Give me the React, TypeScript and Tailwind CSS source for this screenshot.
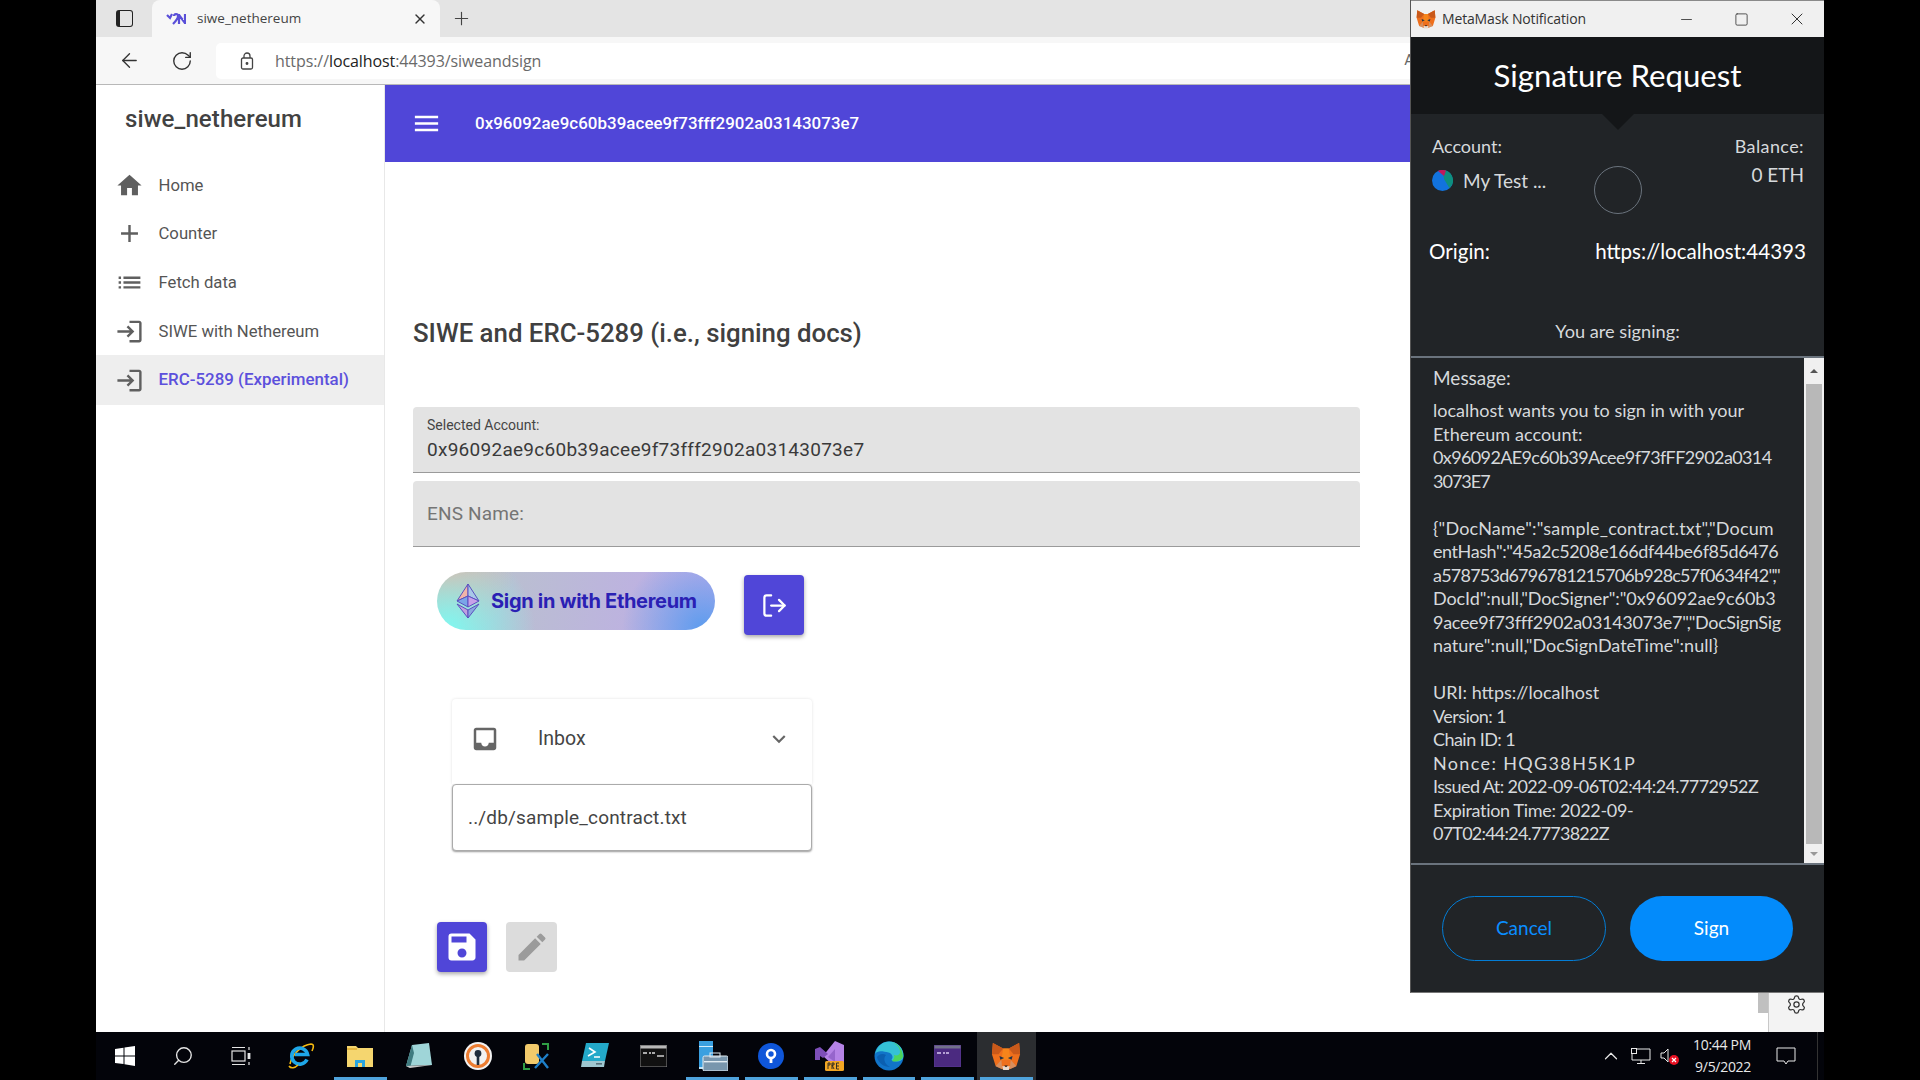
import React from "react";
import { MdHome, MdAdd, MdList, MdLogin, MdInbox, MdExpandMore, MdSave, MdEdit, MdMenu } from "react-icons/md";
import { ArrowLeft, RotateCw, Plus, X, LogOut, Settings, Minus, Square, Search, ChevronUp } from "lucide-react";

function Fox({ size }: { size: number }) {
  return (
    <svg width={size} height={size} viewBox="0 0 32 32">
      <polygon points="2,2 13,8 19,8 30,2 31,14 27,27 20,30 12,30 5,27 1,14" fill="#ee6f1c" />
      <polygon points="2,2 13,8 8,14 1,14" fill="#c9591a" />
      <polygon points="30,2 19,8 24,14 31,14" fill="#c9591a" />
      <polygon points="13,8 19,8 21,20 11,20" fill="#f6851b" />
      <polygon points="5,27 11,20 12,30" fill="#c0ad9e" opacity="0.5" />
      <polygon points="27,27 21,20 20,30" fill="#c0ad9e" opacity="0.5" />
      <polygon points="12,27 20,27 19,31 13,31" fill="#e8d8cc" />
      <polygon points="9,16 14,18 10,20" fill="#233447" />
      <polygon points="23,16 18,18 22,20" fill="#233447" />
      <polygon points="14,26 18,26 16,28" fill="#161616" />
    </svg>
  );
}

function WinLogo() {
  return (
    <svg width="20" height="20" viewBox="0 0 20 20" fill="#fff">
      <polygon points="0,3 8.5,1.8 8.5,9.4 0,9.4" />
      <polygon points="9.5,1.6 20,0 20,9.4 9.5,9.4" />
      <polygon points="0,10.4 8.5,10.4 8.5,18 0,16.9" />
      <polygon points="9.5,10.4 20,10.4 20,20 9.5,18.3" />
    </svg>
  );
}

function TaskView() {
  return (
    <svg width="20" height="20" viewBox="0 0 20 20" fill="none" stroke="#e5e5e5" strokeWidth="1.2">
      <rect x="1" y="5" width="13" height="10" />
      <path d="M1 1.5h13M1 18.5h13M18 1v3M18 16v3" />
      <rect x="16.6" y="7" width="2.8" height="6" fill="#e5e5e5" stroke="none" />
    </svg>
  );
}

function IE() {
  return (
    <svg width="28" height="28" viewBox="0 0 28 28" fill="none">
      <path d="M3 22C5 12 15 3 24 2c3 0 3 3 1 7" stroke="#f5b90f" strokeWidth="1.6" />
      <path d="M20 17.5a8 8 0 1 1 .6-5H8" stroke="#1ea7e8" strokeWidth="3.6" />
      <path d="M2 24c2 3 6 2 9-1" stroke="#f5b90f" strokeWidth="1.6" />
    </svg>
  );
}

function Folder() {
  return (
    <svg width="26" height="24" viewBox="0 0 26 24">
      <path d="M0 2h9l2 2h15v19H0z" fill="#f5d66f" />
      <rect x="0" y="4" width="10" height="2" fill="#e6b73f" />
      <path d="M8 23v-7h10v7h-3v-4h-4v4z" fill="#2aa5e0" />
    </svg>
  );
}

function Notepad() {
  return (
    <svg width="28" height="26" viewBox="0 0 28 26">
      <polygon points="7,2 24,0 27,22 1,23" fill="#9fd5d8" />
      <polygon points="7,2 1,23 5,25 9,10" fill="#3f7b80" />
      <polygon points="27,22 5,25 1,23" fill="#c9c9c9" />
    </svg>
  );
}

function OpenVPN() {
  return (
    <svg width="28" height="28" viewBox="0 0 28 28">
      <circle cx="14" cy="14" r="14" fill="#f2f2f2" />
      <circle cx="14" cy="14" r="10.5" fill="none" stroke="#ed7d31" strokeWidth="3" />
      <circle cx="14" cy="11.5" r="3.4" fill="#1f2d3d" />
      <rect x="12.7" y="12" width="2.6" height="11" fill="#1f2d3d" />
    </svg>
  );
}

function DbTool() {
  return (
    <svg width="28" height="28" viewBox="0 0 28 28" fill="none">
      <rect x="3" y="2" width="14" height="20" rx="3" fill="#f2ca6b" />
      <path d="M20 2h6v6M2 21v6h6" stroke="#2f9e44" strokeWidth="2" />
      <path d="M13 26L26 12M15 12l11 14" stroke="#1e7fc9" strokeWidth="2.4" />
    </svg>
  );
}

function PowerShell() {
  return (
    <svg width="28" height="26" viewBox="0 0 28 26">
      <polygon points="5,0 28,0 24,18 1,18" fill="#23a9c9" />
      <polygon points="1,18 24,18 23,24 0,24" fill="#9fc7d0" />
      <path d="M8 5l6 4-7 4M13 14h6" stroke="#fff" strokeWidth="1.6" fill="none" />
      <rect x="15" y="20" width="6" height="1.6" fill="#55707a" />
    </svg>
  );
}

function Cmd({ purple }: { purple?: boolean }) {
  return (
    <svg width="27" height="22" viewBox="0 0 27 22">
      <rect width="27" height="22" fill={purple ? "#4b2a80" : "#111"} stroke={purple ? "#5b3a94" : "#888"} />
      <rect x="0.5" y="0.5" width="26" height="3" fill={purple ? "#72718a" : "#b8b8b8"} />
      <path d="M3 8h4M9 8h2M12 8h3" stroke={purple ? "#d8c8f0" : "#ddd"} strokeWidth="1.4" />
      {!purple && <path d="M17 11h7" stroke="#ddd" strokeWidth="1.4" />}
    </svg>
  );
}

function Toolbox() {
  return (
    <svg width="30" height="30" viewBox="0 0 30 30">
      <rect x="1" y="0" width="14" height="26" fill="#3aa0e0" />
      <rect x="1" y="5" width="14" height="1" fill="#d5eefc" />
      <rect x="1" y="26" width="10" height="2" fill="#bde3f7" />
      <rect x="5" y="15" width="25" height="15" rx="1.5" fill="#7896ad" stroke="#e2ecf2" />
      <rect x="12" y="12" width="10" height="4" fill="none" stroke="#e2ecf2" />
      <rect x="6" y="20" width="23" height="1.4" fill="#e2ecf2" />
    </svg>
  );
}

function BlueKey() {
  return (
    <svg width="26" height="26" viewBox="0 0 26 26">
      <circle cx="13" cy="13" r="13" fill="#0f56d9" />
      <circle cx="13" cy="11" r="4" fill="none" stroke="#fff" strokeWidth="2.6" />
      <rect x="11.6" y="14" width="2.8" height="6" fill="#fff" />
    </svg>
  );
}

function VS() {
  return (
    <svg width="30" height="30" viewBox="0 0 30 30">
      <polygon points="20,0 29,4 29,22 20,26 8,15" fill="#b583e6" />
      <polygon points="0,8 5,6 13,13 8,17 5,15 5,19 0,19" fill="#7d4fb8" />
      <polygon points="13,16 20,21 20,8" fill="#5b2f9c" opacity="0.35" />
      <rect x="10" y="20" width="19" height="10" rx="1.5" fill="#f2a623" />
      <path d="M13 28v-6h2v2h-2M17 28v-6h2v2h-2l2 4M24 22h-2.5v6H24M21.5 25H24" stroke="#222" strokeWidth="0.9" fill="none" />
    </svg>
  );
}

function Edge() {
  return (
    <svg width="30" height="30" viewBox="0 0 30 30">
      <circle cx="15" cy="15" r="14.5" fill="#1174c9" />
      <path d="M1 13C3 4 10 .5 15 .5c8 0 14.5 6 14.5 14 0 4-3 6-7 6-3 0-5-1-5-2 2-2 1-6-3-7C9 10 3 9 1 13z" fill="#35c1d6" />
      <path d="M18 20c3 1 8 1 11-4 0-7-5-14-12-15 6 2 9 6 9 10 0 3-3 4-6 3 1 2 0 4-2 6z" fill="#4cd55d" />
      <path d="M12 14c-3 3-2 9 4 12-6 0-12-4-13-10 2-3 6-4 9-2z" fill="#0b5fb0" />
    </svg>
  );
}

const messageBlocks: { t: string; c: string }[][] = [
  [
    { t: "localhost wants you to sign in with your", c: "" },
    { t: "Ethereum account:", c: "tracking-[0.09px]" },
    { t: "0x96092AE9c60b39Acee9f73fFF2902a0314", c: "tracking-[-0.63px]" },
    { t: "3073E7", c: "tracking-[-1px]" },
  ],
  [
    { t: '{"DocName":"sample_contract.txt","Docum', c: "tracking-[0.16px]" },
    { t: 'entHash":"45a2c5208e166df44be6f85d6476', c: "tracking-[-0.43px]" },
    { t: 'a578753d6796781215706b928c57f0634f42","', c: "tracking-[-0.78px]" },
    { t: 'DocId":null,"DocSigner":"0x96092ae9c60b3', c: "tracking-[-0.08px]" },
    { t: '9acee9f73fff2902a03143073e7","DocSignSig', c: "tracking-[-0.31px]" },
    { t: 'nature":null,"DocSignDateTime":null}', c: "" },
  ],
  [
    { t: "URI: https://localhost", c: "" },
    { t: "Version: 1", c: "tracking-[-0.56px]" },
    { t: "Chain ID: 1", c: "tracking-[-0.55px]" },
    { t: "Nonce: HQG38H5K1P", c: "tracking-[1.35px]" },
    { t: "Issued At: 2022-09-06T02:44:24.7772952Z", c: "tracking-[-0.6px]" },
    { t: "Expiration Time: 2022-09-", c: "tracking-[-0.32px]" },
    { t: "07T02:44:24.7773822Z", c: "tracking-[-0.78px]" },
  ],
];

const nav = [
  { label: "Home", icon: <MdHome size={29} /> },
  { label: "Counter", icon: <MdAdd size={29} /> },
  { label: "Fetch data", icon: <MdList size={29} /> },
  { label: "SIWE with Nethereum", icon: <MdLogin size={29} /> },
];

function TaskItem({ children, line, active }: { children: React.ReactNode; line?: boolean; active?: boolean }) {
  return (
    <div className={`relative w-[58.75px] h-full flex items-center justify-center ${active ? "bg-[#2b2d30]" : ""}`}>
      {children}
      {line && <div className="absolute bottom-0 left-[3px] right-[3px] h-[3px] bg-[#4fa3dc]" />}
    </div>
  );
}

export default function App() {
  return (
    <div className="w-[1920px] h-[1080px] bg-black flex px-[96px] overflow-hidden font-['Roboto',sans-serif]">
      <div className="relative w-[1728px] h-full flex flex-col">
        {/* tab strip */}
        <div className="h-[37px] bg-[#e4e4e4] flex items-end shrink-0">
          <div className="w-[56px] h-full flex items-center justify-center">
            <div className="w-[17px] h-[17px] rounded-[3px] border-[1.5px] border-[#222] border-l-[4px]" />
          </div>
          <div className="w-[288px] h-[37px] bg-[#f7f7f7] rounded-t-[8px] flex items-center pl-[14px] pr-[12px]">
            <svg width="20" height="14" viewBox="0 0 20 14" fill="none" stroke="#5a4fd8" strokeWidth="2.2">
              <path d="M1 3l3 3 2-4" />
              <path d="M7 12c3-3 5-5 5-8 0-3-4-2-4 0M13 2v10M19 2v10M13 3l6 8" />
            </svg>
            <span className="ml-[11px] text-[13.5px] text-[#444] font-['Open_Sans',sans-serif] flex-1">siwe_nethereum</span>
            <X size={16} color="#333" strokeWidth={2} />
          </div>
          <div className="h-full flex items-center pl-[11px]">
            <Plus size={21} color="#444" strokeWidth={1.3} />
          </div>
        </div>
        {/* address row */}
        <div className="h-[48px] bg-[#f7f7f7] border-b border-[#b8b8b8] flex items-center shrink-0">
          <div className="w-[60px] flex justify-center pl-[6px]">
            <ArrowLeft size={23} color="#333" strokeWidth={1.4} />
          </div>
          <div className="w-[46px] flex justify-center pl-[5px]">
            <RotateCw size={22} color="#333" strokeWidth={1.5} />
          </div>
          <div className="ml-[14px] flex-1 h-[36px] bg-white rounded-l-[5px] flex items-center pl-[24px]">
            <svg width="14" height="18" viewBox="0 0 14 18" fill="none" stroke="#444" strokeWidth="1.3">
              <rect x="1.5" y="6" width="11" height="11" rx="1.5" />
              <path d="M4 6V4a3 3 0 0 1 6 0v2" />
              <circle cx="7" cy="11.5" r="0.8" fill="#444" />
            </svg>
            <span className="ml-[21px] text-[16px] text-[#6a6a6a] font-['Open_Sans',sans-serif] tracking-[-0.08px]">
              https://<span className="text-[#222]">localhost</span>:44393/siweandsign
            </span>
            <span className="ml-auto mr-[410px] text-[15px] text-[#666]">A</span>
          </div>
        </div>
        {/* page */}
        <div className="flex-1 flex min-h-0 bg-white">
          <aside className="w-[289px] shrink-0 border-r border-[#e8e8e8] flex flex-col">
            <div className="h-[68px] pl-[29px] flex items-center text-[24px] font-medium text-[#424242] tracking-[0.1px]">
              siwe_nethereum
            </div>
            <nav className="mt-[8px] flex flex-col">
              {nav.map((n) => (
                <div key={n.label} className="h-[48.6px] flex items-center pl-[19px] text-[#5f5f5f]">
                  <span className="w-[29px] flex justify-center">{n.icon}</span>
                  <span className="ml-[14.5px] text-[16.7px] text-[#555]">{n.label}</span>
                </div>
              ))}
              <div className="h-[49.5px] flex items-center pl-[19px] bg-[#eeeeee] text-[#5f5f5f]">
                <span className="w-[29px] flex justify-center">
                  <MdLogin size={29} />
                </span>
                <span className="ml-[14.5px] text-[16.9px] font-medium text-[#5c50dc]">ERC-5289 (Experimental)</span>
              </div>
            </nav>
          </aside>
          <main className="flex-1 flex flex-col min-w-0">
            <div className="h-[77px] bg-[#5046d8] flex items-center pl-[26px] text-white shrink-0">
              <MdMenu size={31} />
              <span className="ml-[33px] text-[16.9px] font-medium tracking-[0.05px]">0x96092ae9c60b39acee9f73fff2902a03143073e7</span>
            </div>
            <div className="pl-[28px] flex flex-col">
              <h1 className="mt-[155px] h-[32px] leading-[32px] text-[25.8px] font-medium text-[#404040]">
                SIWE and ERC-5289 (i.e., signing docs)
              </h1>
              <div className="mt-[58px] w-[947px] h-[66px] bg-[#e3e3e3] border-b border-[#9a9a9a] rounded-t-[4px] pl-[14px] flex flex-col">
                <span className="mt-[10px] text-[14px] leading-[16px] text-[#454545]">Selected Account:</span>
                <span className="mt-[5px] text-[19px] leading-[24px] tracking-[0.27px] text-[#3a3a3a]">0x96092ae9c60b39acee9f73fff2902a03143073e7</span>
              </div>
              <div className="mt-[8px] w-[947px] h-[66px] bg-[#e3e3e3] border-b border-[#9a9a9a] rounded-t-[4px] pl-[14px] pt-[2px] flex items-center">
                <span className="text-[19px] text-[#757575] tracking-[0.17px]">ENS Name:</span>
              </div>
              <div className="mt-[25px] ml-[24px] flex items-start">
                <div className="w-[278px] h-[58px] rounded-[29px] flex items-center pl-[19px] bg-[radial-gradient(circle_at_4%_100%,#7ff8f0_0%,transparent_32%),radial-gradient(circle_at_96%_100%,#5b9cee_0%,transparent_30%),radial-gradient(circle_at_4%_0%,#f5a99c_0%,transparent_24%),linear-gradient(100deg,#b8c6c8,#bfaaea)]">
                  <svg width="24" height="34" viewBox="0 0 24 34" stroke="#5a4fc0" strokeWidth="1" strokeLinejoin="round">
                    <polygon points="12,0 1,17 12,12" fill="#f0b4a8" />
                    <polygon points="12,0 23,17 12,12" fill="#a8c8e8" />
                    <polygon points="1,17 12,12 12,23" fill="#7aa5e8" />
                    <polygon points="23,17 12,12 12,23" fill="#c8a0e8" />
                    <polygon points="1,20 12,34 12,26" fill="#c0a0e0" />
                    <polygon points="23,20 12,34 12,26" fill="#8aa8e0" />
                  </svg>
                  <span className="ml-[11px] text-[20px] font-bold font-['Inter',sans-serif] tracking-[-0.3px] text-[#2a20b4]">Sign in with Ethereum</span>
                </div>
                <div className="mt-[3px] ml-[29px] w-[60px] h-[60px] bg-[#5046d8] rounded-[4px] shadow-[0_2px_4px_rgba(0,0,0,0.35)] flex items-center justify-center text-white">
                  <LogOut size={27} strokeWidth={2} />
                </div>
              </div>
              <div className="mt-[64px] ml-[39px] w-[360px] flex flex-col">
                <div className="h-[85px] bg-white rounded-t-[4px] shadow-[0_0_3px_rgba(0,0,0,0.12)] flex items-center pl-[18px] pr-[20px] pb-[6px] text-[#666]">
                  <MdInbox size={30} />
                  <span className="ml-[38px] text-[19.5px] text-[#444] flex-1">Inbox</span>
                  <MdExpandMore size={26} />
                </div>
                <div className="h-[67px] bg-white border border-[#ababab] rounded-[4px] shadow-[0_1px_2px_rgba(0,0,0,0.4)] flex items-center pl-[15px] pt-[1px] text-[19px] tracking-[0.17px] text-[#444]">
                  ../db/sample_contract.txt
                </div>
              </div>
              <div className="mt-[71px] ml-[24px] flex gap-[19px]">
                <div className="w-[50px] h-[50px] bg-[#5046d8] rounded-[4px] shadow-[0_2px_4px_rgba(0,0,0,0.35)] flex items-center justify-center text-white">
                  <MdSave size={36} />
                </div>
                <div className="w-[51px] h-[50px] bg-[#dcdcdc] rounded-[4px] flex items-center justify-center text-[#9b9b9b]">
                  <MdEdit size={36} />
                </div>
              </div>
            </div>
          </main>
        </div>
        {/* taskbar */}
        <div className="h-[48px] bg-[#03040a] flex items-center shrink-0 pr-[6px] relative">
          <div className="flex items-center h-full">
            <div className="w-[58px] h-full flex items-center justify-center"><WinLogo /></div>
            <div className="w-[58px] h-full flex items-center justify-center">
              <Search size={22} color="#e5e5e5" strokeWidth={1.5} className="-scale-x-100" />
            </div>
            <div className="w-[58px] h-full flex items-center justify-center"><TaskView /></div>
            <div className="w-[2px]" />
            <TaskItem><IE /></TaskItem>
            <TaskItem line><Folder /></TaskItem>
            <TaskItem><Notepad /></TaskItem>
            <TaskItem><OpenVPN /></TaskItem>
            <TaskItem><DbTool /></TaskItem>
            <TaskItem><PowerShell /></TaskItem>
            <TaskItem><Cmd /></TaskItem>
            <TaskItem line><Toolbox /></TaskItem>
            <TaskItem line><BlueKey /></TaskItem>
            <TaskItem line><VS /></TaskItem>
            <TaskItem line><Edge /></TaskItem>
            <TaskItem line><Cmd purple /></TaskItem>
            <TaskItem line active><Fox size={30} /></TaskItem>
          </div>
          <div className="ml-auto flex items-center h-full text-[#e8e8e8] border-r border-[#333]">
            <ChevronUp size={22} strokeWidth={1.3} />
            <svg className="ml-[9px]" width="20" height="17" viewBox="0 0 20 17" fill="none" stroke="#e8e8e8">
              <path d="M5 1h14v11H1V6M10 12v3M6 15.5h8" />
              <rect x="0.5" y="0.5" width="5" height="5" />
            </svg>
            <svg className="ml-[9px]" width="20" height="20" viewBox="0 0 20 20" fill="none" stroke="#e8e8e8">
              <path d="M1 7h3l4-4v13l-4-4H1z" />
              <circle cx="14" cy="14" r="5" fill="#e81123" stroke="none" />
              <path d="M12 12l4 4M16 12l-4 4" stroke="#fff" strokeWidth="1.2" />
            </svg>
            <div className="ml-[9px] w-[62px] flex flex-col items-end text-[14px] leading-[22px] font-['Open_Sans',sans-serif] tracking-[-0.3px]">
              <span>10:44 PM</span>
              <span>9/5/2022</span>
            </div>
            <div className="w-[66px] flex justify-center pl-[3px]">
              <svg width="20" height="20" viewBox="0 0 20 20" fill="none" stroke="#e8e8e8">
                <path d="M1 2h18v13h-7l-2 3-2-3H1z" />
              </svg>
            </div>
          </div>
        </div>

        {/* bit of the page that sticks out beneath the popup */}
        <div className="absolute left-[1662px] top-[993px] w-[10px] h-[20px] bg-[#c0c0c0]" />
        <div className="absolute left-[1672px] top-[993px] w-[56px] h-[39px] bg-[#f3f3f3] border-l border-[#c8c8c8] flex justify-center items-start pt-[1px]">
          <Settings size={21} color="#333" strokeWidth={1.4} />
        </div>

        {/* MetaMask popup window */}
        <div className="absolute left-[1314px] top-0 w-[414px] h-[993px] flex flex-col bg-[#212427] border-b border-[#777] border-l border-l-[#555]">
          <div className="h-[37px] bg-[#f0f0f0] border-t border-[#8a8a8a] flex items-center pl-[5px] shrink-0 text-[#333]">
            <Fox size={20} />
            <span className="ml-[6px] mb-[2px] text-[14px] text-[#333] font-['Open_Sans',sans-serif] tracking-[-0.15px]">MetaMask Notification</span>
            <div className="ml-auto flex items-center">
              <div className="w-[55px] flex justify-center"><Minus size={17} strokeWidth={1.2} /></div>
              <div className="w-[55px] flex justify-center"><Square size={15} strokeWidth={1.3} /></div>
              <div className="w-[55px] flex justify-center"><X size={20} strokeWidth={1.2} /></div>
            </div>
          </div>
          <div className="relative h-[77px] bg-[#141618] flex items-center justify-center shrink-0">
            <span className="text-[31.2px] text-white font-['Lato',sans-serif]">Signature Request</span>
            <div className="absolute top-full left-1/2 -translate-x-1/2 w-0 h-0 border-x-[16px] border-x-transparent border-t-[16px] border-t-[#141618]" />
          </div>
          <div className="h-[242px] shrink-0 font-['Lato',sans-serif] flex flex-col">
            <div className="h-[125px] relative flex justify-between pl-[21px] pr-[20px] pt-[20px]">
              <div className="flex flex-col">
                <span className="text-[18px] leading-[24px] text-[#d6d9dc]">Account:</span>
                <div className="mt-[9px] flex items-center">
                  <svg width="21" height="21" viewBox="0 0 21 21" className="-mt-[2px]">
                    <circle cx="10.5" cy="10.5" r="10.5" fill="#1273de" />
                    <path d="M10.5 0a10.5 10.5 0 0 1 7 18.3L12 9z" fill="#0e8f7f" />
                    <path d="M6 1a10 10 0 0 1 8-.4L12 6z" fill="#c2185b" />
                  </svg>
                  <span className="ml-[10px] text-[19px] text-[#d6d9dc]">My Test ...</span>
                </div>
              </div>
              <div className="absolute left-1/2 -translate-x-1/2 top-[52px] w-[48px] h-[48px] rounded-full border border-[#6a737d]" />
              <div className="flex flex-col items-end">
                <span className="text-[18px] leading-[24px] tracking-[0.4px] text-[#d6d9dc]">Balance:</span>
                <span className="mt-[5px] text-[19px] leading-[24px] text-[#d6d9dc]">0 ETH</span>
              </div>
            </div>
            <div className="flex justify-between pl-[18px] pr-[18px] text-[20.6px] leading-[24px] text-white">
              <span>Origin:</span>
              <span>https://localhost:44393</span>
            </div>
            <div className="mt-[56px] text-center text-[18.2px] leading-[24px] text-[#d6d9dc]">You are signing:</div>
          </div>
          <div className="h-[509px] shrink-0 flex border-y-[2px] border-[#6a737d]">
            <div className="flex-1 min-w-0 pl-[22px] font-['Lato',sans-serif] text-[#d6d9dc] whitespace-pre">
              <div className="mt-[8px] text-[19px] leading-[24px]">Message:</div>
              <div className="mt-[9px] text-[18px] leading-[23.5px]">
                {messageBlocks.map((block, i) => (
                  <div key={i} className="mb-[23.5px]">
                    {block.map((l, j) => (
                      <div key={j} className={l.c}>{l.t}</div>
                    ))}
                  </div>
                ))}
              </div>
            </div>
            <div className="w-[20px] bg-[#f0f0f0] flex flex-col items-center shrink-0">
              <div className="h-[26px] flex items-center justify-center">
                <div className="w-0 h-0 border-x-[4px] border-x-transparent border-b-[4px] border-b-[#555]" />
              </div>
              <div className="w-[16px] flex-1 bg-[#b8b8b8]" />
              <div className="h-[19px] flex items-center justify-center">
                <div className="w-0 h-0 border-x-[4px] border-x-transparent border-t-[4px] border-t-[#999]" />
              </div>
            </div>
          </div>
          <div className="flex-1 flex pt-[31px] pl-[31px] font-['Lato',sans-serif] text-[19px]">
            <div className="w-[164px] h-[65px] rounded-full border border-[#037dd6] text-[#0a8eff] flex items-center justify-center">Cancel</div>
            <div className="ml-[24px] w-[163px] h-[65px] rounded-full bg-[#038bfb] text-white flex items-center justify-center">Sign</div>
          </div>
        </div>
      </div>
    </div>
  );
}
